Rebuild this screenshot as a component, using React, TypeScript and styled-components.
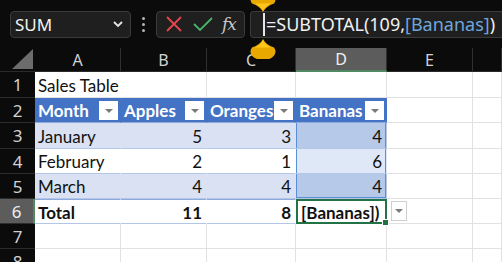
import React from 'react';
import styled, { createGlobalStyle, css } from 'styled-components';

const GlobalStyle = createGlobalStyle`
  html, body {
    margin: 0;
    padding: 0;
    background: #0b0b0b;
    overflow: hidden;
  }
  * {
    box-sizing: border-box;
  }
`;

const uiFont = `"Noto Sans", "Open Sans", sans-serif`;
const cellFont = `Lato, "Liberation Sans", sans-serif`;

const tableBlue = '#4472c4';
const bandBlue = '#d9e1f2';
const refLine = '#5b8fd6';
const gridLine = '#e1e1e1';
const excelGreen = '#217346';

const Page = styled.div`
  width: 502px;
  height: 262px;
  overflow: hidden;
  background: #0b0b0b;
`;

const Toolbar = styled.div`
  position: relative;
  display: flex;
  align-items: center;
  height: 48px;
  padding: 0 0 0 10px;
  gap: 0;
  font-family: ${uiFont};
`;

const Box = styled.div`
  height: 27px;
  background: #1f1f1f;
  border: 1px solid #3b3b3b;
  border-radius: 4px;
  display: flex;
  align-items: center;
`;

const NameBox = styled(Box)`
  width: 121px;
  padding: 0 6px 0 4px;
  justify-content: space-between;
  color: #f2f2f2;
  font-size: 17px;
`;

const Dots = styled.div`
  width: 25px;
  display: flex;
  flex-direction: column;
  align-items: center;
  gap: 3px;
  span {
    width: 3px;
    height: 3px;
    border-radius: 50%;
    background: #b5b5b5;
  }
`;

const FuncBox = styled(Box)`
  width: 89px;
  justify-content: space-around;
  padding: 0 4px;
`;

const Fx = styled.span`
  font-family: "DejaVu Serif", "Liberation Serif", serif;
  font-style: italic;
  font-size: 17px;
  color: #c8c8c8;
  letter-spacing: -1px;
`;

const FormulaBar = styled(Box)`
  margin-left: 5px;
  flex: 1;
  border-right: none;
  border-radius: 4px 0 0 4px;
  padding-left: 12px;
  font-size: 18px;
  color: #f0f0f0;
  white-space: nowrap;
  overflow: hidden;
`;

const Caret = styled.span`
  display: inline-block;
  width: 2px;
  height: 23px;
  background: #e6e6e6;
  margin-right: 1px;
`;

const RefText = styled.span`
  color: #6ea6dc;
`;

const Handle = styled.svg<{ $top: number }>`
  position: absolute;
  left: 249px;
  top: ${(p) => p.$top}px;
  z-index: 5;
`;

const Sheet = styled.div`
  display: grid;
  grid-template-columns: 35px 86px 86px 89px 91px 86px 1fr;
  grid-template-rows: 24px 26px 25px 26px 25px 25px 25px 25px 25px;
  font-family: ${cellFont};
`;

const Corner = styled.div`
  background: #0b0b0b;
  position: relative;
  border-bottom: 1px solid #2a2a2a;
  &::after {
    content: '';
    position: absolute;
    right: 2px;
    bottom: 2px;
    border-left: 21px solid transparent;
    border-bottom: 20px solid #6c6c6c;
  }
`;

const ColHead = styled.div<{ $active?: boolean }>`
  display: flex;
  align-items: center;
  justify-content: center;
  font-family: ${uiFont};
  font-size: 16px;
  color: #d2d2d2;
  border-right: 1px solid #303030;
  ${(p) =>
    p.$active
      ? css`
          background: #5c5c5c;
          color: #f0f0f0;
          border-bottom: 2px solid #4f8a62;
        `
      : css`
          background: #0b0b0b;
          border-bottom: 1px solid #2a2a2a;
        `}
`;

const RowHead = styled.div<{ $active?: boolean }>`
  display: flex;
  align-items: center;
  justify-content: center;
  font-family: ${uiFont};
  font-size: 17px;
  color: #d2d2d2;
  border-bottom: 1px solid #2c2c2c;
  ${(p) =>
    p.$active
      ? css`
          background: #5c5c5c;
          color: #f0f0f0;
          border-right: 2px solid #4f8a62;
        `
      : css`
          background: #0b0b0b;
        `}
`;

type Kind = 'plain' | 'title' | 'head' | 'band' | 'row' | 'total';

const Cell = styled.div<{
  $kind: Kind;
  $num?: boolean;
  $bg?: string;
  $refTop?: boolean;
  $refBottom?: boolean;
  $refSides?: boolean;
}>`
  position: relative;
  display: flex;
  align-items: center;
  justify-content: ${(p) => (p.$num ? 'flex-end' : 'flex-start')};
  padding: 1px 4px 0 3px;
  font-size: 17px;
  white-space: nowrap;
  color: #111;
  background: ${(p) => p.$bg || '#ffffff'};
  border-right: 1px solid ${gridLine};
  border-bottom: 1px solid ${gridLine};
  ${(p) =>
    p.$kind === 'title' &&
    css`
      z-index: 1;
      border-right-color: transparent;
    `}
  ${(p) =>
    p.$kind === 'head' &&
    css`
      background: ${tableBlue};
      color: #ffffff;
      font-weight: 700;
      border-right-color: ${tableBlue};
      border-bottom-color: #8eaadb;
      overflow: hidden;
    `}
  ${(p) =>
    (p.$kind === 'band' || p.$kind === 'row') &&
    css`
      background: ${p.$bg || (p.$kind === 'band' ? bandBlue : '#ffffff')};
      border-right-color: transparent;
      border-bottom-color: #b4c6e7;
    `}
  ${(p) =>
    p.$kind === 'total' &&
    css`
      font-weight: 700;
      border-top: 1px solid #8ea9db;
      border-bottom-color: #b4c6e7;
      border-right-color: transparent;
    `}
  ${(p) =>
    p.$refSides &&
    css`
      box-shadow: inset 1px 0 0 ${refLine}, inset -1px 0 0 ${refLine}
        ${p.$refBottom ? `, inset 0 -1px 0 ${refLine}` : ''};
    `}
`;

const ActiveCell = styled(Cell)`
  border: 2px solid ${excelGreen};
  padding-left: 3px;
  overflow: visible;
  z-index: 2;
  &::after {
    content: '';
    position: absolute;
    right: -4px;
    bottom: -4px;
    width: 5px;
    height: 5px;
    background: ${excelGreen};
    border: 1px solid #fff;
  }
`;

const FilterButton = styled.span<{ $framed?: boolean }>`
  position: absolute;
  right: 2px;
  top: 3px;
  width: 19px;
  height: 19px;
  background: #ffffff;
  display: flex;
  align-items: center;
  justify-content: center;
  border: ${(p) => (p.$framed ? '1px solid #cfcfcf' : 'none')};
  &::before {
    content: '';
    border-left: 4px solid transparent;
    border-right: 4px solid transparent;
    border-top: 4px solid #7a7a7a;
  }
`;

const DropPick = styled(FilterButton)`
  left: 4px;
  right: auto;
  top: 2px;
  width: 16px;
  height: 20px;
`;

const Chevron = () => (
  <svg width="12" height="8" viewBox="0 0 12 8">
    <path d="M2 2 L6 6 L10 2" fill="none" stroke="#e6e6e6" strokeWidth="1.8" />
  </svg>
);

const Cross = () => (
  <svg width="18" height="18" viewBox="0 0 18 18">
    <path d="M2 2 L16 16 M16 2 L2 16" stroke="#e5474d" strokeWidth="1.8" />
  </svg>
);

const Check = () => (
  <svg width="22" height="18" viewBox="0 0 22 18">
    <path d="M2 9 L8 15 L20 3" fill="none" stroke="#49b36a" strokeWidth="1.8" />
  </svg>
);

const Drop = ({ top, up }: { top: number; up?: boolean }) => (
  <Handle $top={top} width="28" height="20" viewBox="0 0 28 20">
    <g transform={up ? undefined : 'translate(0 20) scale(1 -1)'}>
      <path
        d="M14 0 Q17 6 25 8.5 A12.5 8.5 0 1 1 3 8.5 Q11 6 14 0 Z"
        fill="#e8a800"
      />
      <path d="M14 1 Q16.5 6 22 8.5 L6 8.5 Q11.5 6 14 1 Z" fill="#ffc61a" />
    </g>
  </Handle>
);

const columns = ['A', 'B', 'C', 'D', 'E', ''];

export default function App() {
  return (
    <Page>
      <GlobalStyle />
      <Toolbar>
        <NameBox>
          <span>SUM</span>
          <Chevron />
        </NameBox>
        <Dots>
          <span />
          <span />
          <span />
        </Dots>
        <FuncBox>
          <Cross />
          <Check />
          <Fx>fx</Fx>
        </FuncBox>
        <FormulaBar>
          <Caret />
          =SUBTOTAL(109,<RefText>[Bananas]</RefText>)
        </FormulaBar>
        <Drop top={-8} />
        <Drop top={39} up />
      </Toolbar>

      <Sheet>
        <Corner />
        {columns.map((c) => (
          <ColHead key={c || 'F'} $active={c === 'D'}>
            {c}
          </ColHead>
        ))}

        <RowHead>1</RowHead>
        <Cell $kind="title">Sales Table</Cell>
        <Cell $kind="plain" />
        <Cell $kind="plain" />
        <Cell $kind="plain" />
        <Cell $kind="plain" />
        <Cell $kind="plain" />

        <RowHead>2</RowHead>
        <Cell $kind="head">
          Month<FilterButton />
        </Cell>
        <Cell $kind="head">
          Apples<FilterButton />
        </Cell>
        <Cell $kind="head">
          Oranges<FilterButton />
        </Cell>
        <Cell $kind="head">
          Bananas<FilterButton />
        </Cell>
        <Cell $kind="plain" />
        <Cell $kind="plain" />

        <RowHead>3</RowHead>
        <Cell $kind="band">January</Cell>
        <Cell $kind="band" $num>5</Cell>
        <Cell $kind="band" $num>3</Cell>
        <Cell $kind="band" $num $bg="#b7c9e8" $refSides>4</Cell>
        <Cell $kind="plain" />
        <Cell $kind="plain" />

        <RowHead>4</RowHead>
        <Cell $kind="row">February</Cell>
        <Cell $kind="row" $num>2</Cell>
        <Cell $kind="row" $num>1</Cell>
        <Cell $kind="row" $num $bg="#dfe8f6" $refSides>6</Cell>
        <Cell $kind="plain" />
        <Cell $kind="plain" />

        <RowHead>5</RowHead>
        <Cell $kind="band">March</Cell>
        <Cell $kind="band" $num>4</Cell>
        <Cell $kind="band" $num>4</Cell>
        <Cell $kind="band" $num $bg="#b7c9e8" $refSides $refBottom>4</Cell>
        <Cell $kind="plain" />
        <Cell $kind="plain" />

        <RowHead $active>6</RowHead>
        <Cell $kind="total">Total</Cell>
        <Cell $kind="total" $num>11</Cell>
        <Cell $kind="total" $num>8</Cell>
        <ActiveCell $kind="total">[Bananas])</ActiveCell>
        <Cell $kind="plain">
          <DropPick $framed />
        </Cell>
        <Cell $kind="plain" />

        {[7, 8].map((r) => (
          <React.Fragment key={r}>
            <RowHead>{r}</RowHead>
            {columns.map((c) => (
              <Cell key={c || 'F'} $kind="plain" />
            ))}
          </React.Fragment>
        ))}
      </Sheet>
    </Page>
  );
}
